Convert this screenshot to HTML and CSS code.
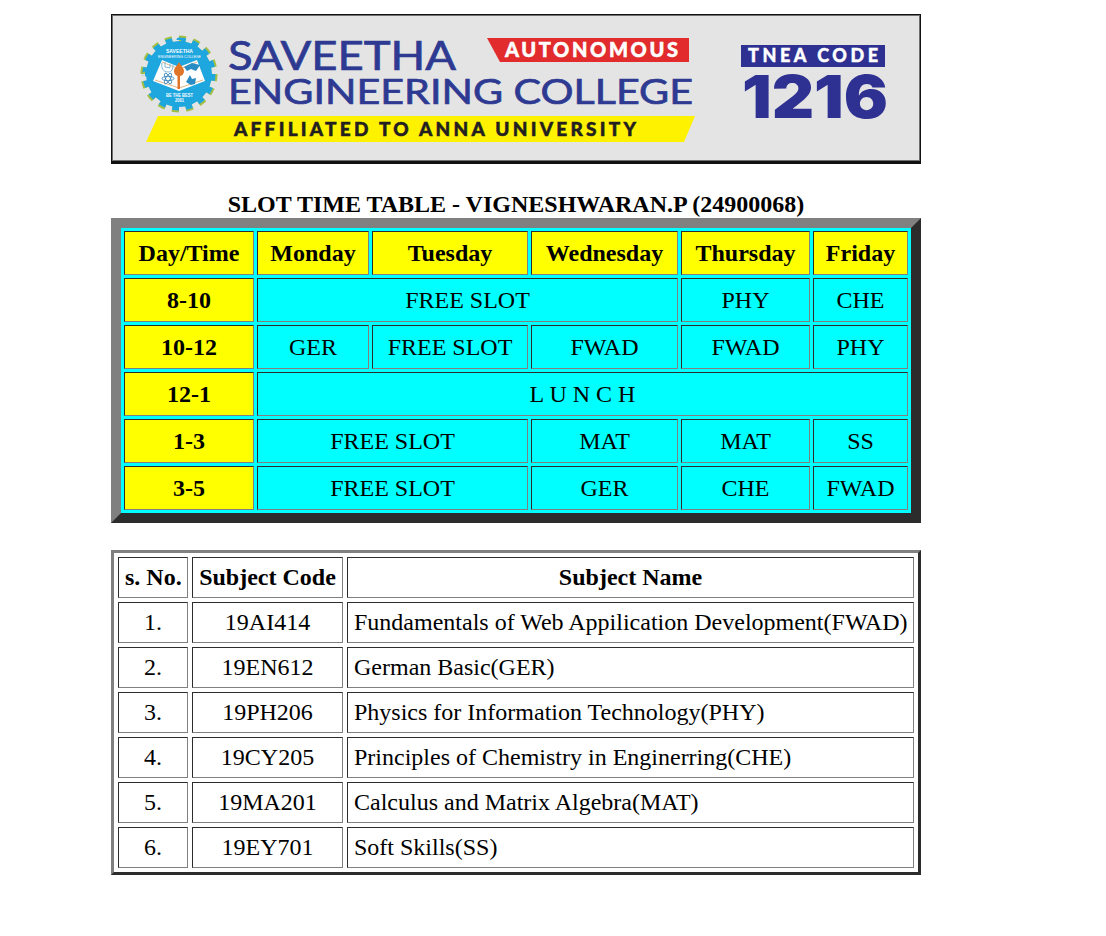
FILE: index.html
```html
<!DOCTYPE html>
<html lang="en">
<head>
<meta charset="utf-8">
<title>Slot Time Table</title>
<link rel="stylesheet" href="styles.css">
</head>
<body>
<main class="page">
  <svg class="banner" viewBox="111 14 810 150" role="img" aria-label="Saveetha Engineering College banner">
    <rect class="b-edge" x="111" y="14" width="810" height="150"/>
    <rect class="b-rim" x="112" y="15" width="808" height="146"/>
    <rect class="b-fill" x="113" y="16" width="806" height="144"/>

    <circle class="gear-green" cx="179" cy="74" r="34.500" pathLength="32"/>
    <circle class="gear-blue" cx="179" cy="74" r="34" pathLength="32"/>
    <circle class="gear-disc" cx="179" cy="74" r="33"/>
    <text class="logo-t logo-b" x="166" y="53" textLength="27" lengthAdjust="spacingAndGlyphs">SAVEETHA</text>
    <text class="logo-t logo-s" x="158" y="58" textLength="43" lengthAdjust="spacingAndGlyphs">ENGINEERING COLLEGE</text>
    <path class="book" d="M162 60 L179 67 L197 60 L205 81 L179 91 L153 81 Z"/>
    <path class="book-line" d="M162 62 L179 69 L197 62 M155 80 L179 88 L203 80"/>
    <path class="sk-light" d="M162 63 C161 68 163 72 168 72 C172 72 173 69 173 65 M165 62 L165 67 L170 68 L170 64"/>
    <path class="sk-blue" d="M184 67 L192 63 L200 65 L196 71 L191 69 L187 71 Z"/>
    <g class="atom">
      <ellipse cx="168" cy="78.500" rx="6" ry="2.200"/>
      <ellipse cx="168" cy="78.500" rx="6" ry="2.200" transform="rotate(60 168 78.500)"/>
      <ellipse cx="168" cy="78.500" rx="6" ry="2.200" transform="rotate(120 168 78.500)"/>
    </g>
    <path class="sk-blue" d="M186 82 L190 75 L192 79 L196 78 L195 84 L191 85 Z"/>
    <rect class="torch" x="177.500" y="72" width="2.500" height="17"/>
    <path class="flame" d="M179 62 C181 66 184 68 184 71 C184 74 182 76 179 76 C176 76 174 74 174 71 C174 68 177 66 179 62 Z"/>
    <text class="logo-t logo-b" x="166" y="97" textLength="27" lengthAdjust="spacingAndGlyphs">BE THE BEST</text>
    <text class="logo-t logo-b" x="175" y="102" textLength="9" lengthAdjust="spacingAndGlyphs">2001</text>

    <text class="t-name t-sav" x="228" y="70" textLength="228" lengthAdjust="spacingAndGlyphs">SAVEETHA</text>
    <text class="t-name t-eng" x="228" y="104" textLength="465" lengthAdjust="spacingAndGlyphs">ENGINEERING COLLEGE</text>

    <path class="red" d="M487 38 L689 38 L689 62 L500 62 Z"/>
    <text class="t-auto" x="505" y="57" textLength="173" lengthAdjust="spacing">AUTONOMOUS</text>

    <path class="yellow" d="M158 116 L695 116 L684 142 L146 142 Z"/>
    <text class="t-aff" x="234" y="135.500" textLength="402" lengthAdjust="spacing">AFFILIATED TO ANNA UNIVERSITY</text>

    <rect class="navy" x="741" y="45" width="144" height="22"/>
    <text class="t-tnea" x="748" y="62" textLength="130" lengthAdjust="spacing">TNEA CODE</text>
    <text class="t-code" x="742" y="118" textLength="146" lengthAdjust="spacingAndGlyphs">1216</text>
  </svg>

  <h1 class="title">SLOT TIME TABLE - VIGNESHWARAN.P (24900068)</h1>

  <table class="slots">
    <colgroup>
      <col class="s1"><col class="s2"><col class="s3"><col class="s4"><col class="s5"><col class="s6">
    </colgroup>
    <tr>
      <th>Day/Time</th><th>Monday</th><th>Tuesday</th><th>Wednesday</th><th>Thursday</th><th>Friday</th>
    </tr>
    <tr><th>8-10</th><td colspan="3">FREE SLOT</td><td>PHY</td><td>CHE</td></tr>
    <tr><th>10-12</th><td>GER</td><td>FREE SLOT</td><td>FWAD</td><td>FWAD</td><td>PHY</td></tr>
    <tr><th>12-1</th><td colspan="5">L U N C H</td></tr>
    <tr><th>1-3</th><td colspan="2">FREE SLOT</td><td>MAT</td><td>MAT</td><td>SS</td></tr>
    <tr><th>3-5</th><td colspan="2">FREE SLOT</td><td>GER</td><td>CHE</td><td>FWAD</td></tr>
  </table>

  <table class="subjects">
    <colgroup>
      <col class="c1"><col class="c2"><col class="c3">
    </colgroup>
    <tr><th>s. No.</th><th>Subject Code</th><th>Subject Name</th></tr>
    <tr><td>1.</td><td>19AI414</td><td class="name">Fundamentals of Web Appilication Development(FWAD)</td></tr>
    <tr><td>2.</td><td>19EN612</td><td class="name">German Basic(GER)</td></tr>
    <tr><td>3.</td><td>19PH206</td><td class="name">Physics for Information Technology(PHY)</td></tr>
    <tr><td>4.</td><td>19CY205</td><td class="name">Principles of Chemistry in Enginerring(CHE)</td></tr>
    <tr><td>5.</td><td>19MA201</td><td class="name">Calculus and Matrix Algebra(MAT)</td></tr>
    <tr><td>6.</td><td>19EY701</td><td class="name">Soft Skills(SS)</td></tr>
  </table>
</main>
</body>
</html>
```

FILE: styles.css
```css
html, body {
  margin: 0;
  padding: 0;
  background: #fff;
}

body {
  font-family: "Liberation Serif", "Times New Roman", serif;
  font-size: 24px;
  color: #000;
}

.page {
  width: 810px;
  margin-left: 111px;
  padding-top: 14px;
}

.banner {
  display: block;
  width: 810px;
  height: 150px;
}

.b-edge { fill: #111; }
.b-rim { fill: #6f6f6f; }
.b-fill { fill: #e4e4e4; }

.gear-green, .gear-blue {
  fill: none;
  stroke-dasharray: 1 1;
}
.gear-green { stroke: #a3bf45; stroke-width: 8; }
.gear-blue { stroke: #1ea6df; stroke-width: 5; }
.gear-disc { fill: #1ea6df; }

.logo-t {
  font-family: "Liberation Sans", Arial, sans-serif;
  fill: #fff;
}
.logo-b { font-size: 4.500px; font-weight: 700; }
.logo-s { font-size: 3.500px; }

.book { fill: #fff; }
.book-line { fill: none; stroke: #d8a26a; stroke-width: 0.8; }
.sk-light { fill: none; stroke: #7cb9dc; stroke-width: 1; }
.sk-blue { fill: #2a8cc4; }
.atom ellipse { fill: none; stroke: #2a7fb8; stroke-width: 0.8; }
.torch { fill: #e0752a; }
.flame { fill: #e0752a; }

.t-name {
  font-family: Lato, "Open Sans", sans-serif;
  font-weight: 400;
  fill: #2e3a92;
  stroke: #2e3a92;
  stroke-width: 0.7;
}
.t-sav { font-size: 40px; }
.t-eng { font-size: 35px; }

.red { fill: #e12b2d; }
.t-auto {
  font-family: Lato, "Open Sans", sans-serif;
  font-size: 20px;
  font-weight: 900;
  fill: #fff;
  stroke: #fff;
  stroke-width: 0.5;
}

.yellow { fill: #fff200; }
.t-aff {
  font-family: Lato, "Open Sans", sans-serif;
  font-size: 19px;
  font-weight: 900;
  fill: #231f20;
  stroke: #231f20;
  stroke-width: 0.5;
}

.navy { fill: #2e3192; }
.t-tnea {
  font-family: Lato, "Open Sans", sans-serif;
  font-size: 18px;
  font-weight: 900;
  fill: #fff;
  stroke: #fff;
  stroke-width: 0.4;
}
.t-code {
  font-family: Inter, Lato, sans-serif;
  font-size: 59px;
  font-weight: 900;
  fill: #2e3192;
}

.title {
  margin: 27px 0 0;
  font-size: 24px;
  font-weight: 700;
  line-height: 27px;
  text-align: center;
}

table {
  table-layout: fixed;
  border-collapse: separate;
  width: 810px;
}

th, td {
  box-sizing: border-box;
  border: 1px inset gray;
  text-align: center;
  vertical-align: middle;
  font-size: 24px;
  white-space: nowrap;
}

.slots {
  border: 10px outset gray;
  border-spacing: 3px;
  background: #0ff;
}
.slots td, .slots th {
  height: 44px;
  padding: 0;
  background: #0ff;
}
.slots th { background: #ff0; }

.s1 { width: 130px; }
.s2 { width: 112px; }
.s3 { width: 156px; }
.s4 { width: 147px; }
.s5 { width: 129px; }
.s6 { width: 95px; }

.subjects {
  margin-top: 27px;
  border: 3px outset gray;
  border-spacing: 4px;
}
.subjects td, .subjects th {
  height: 41px;
  padding: 6px;
}
.subjects .name { text-align: left; }

.c1 { width: 70px; }
.c2 { width: 151px; }
.c3 { width: 567px; }
```
